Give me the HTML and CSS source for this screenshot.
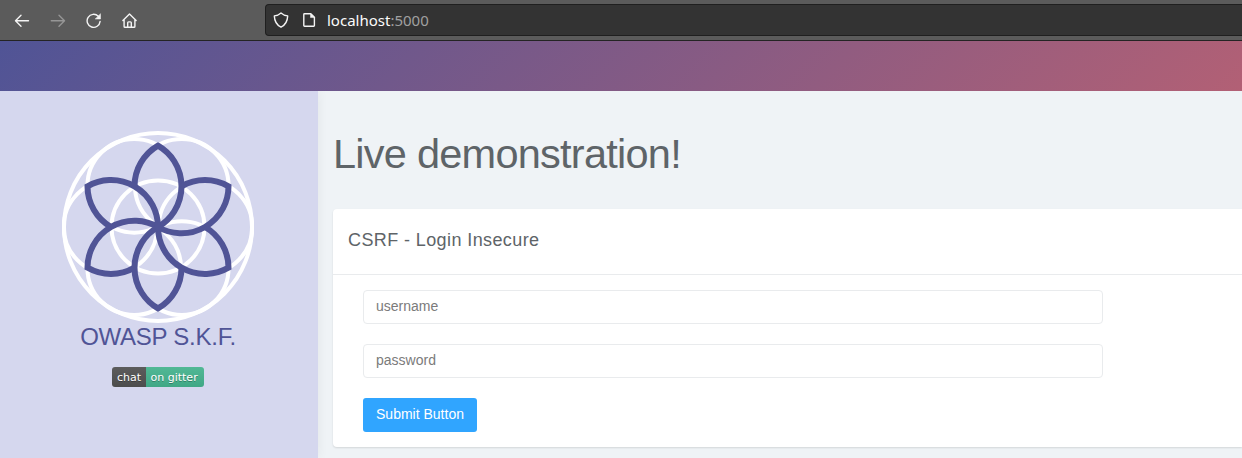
FILE: index.html
```html
<!DOCTYPE html>
<html lang="en">
<head>
<meta charset="utf-8">
<title>OWASP S.K.F.</title>
<link rel="stylesheet" href="styles.css">
</head>
<body>
<header class="toolbar">
  <nav class="nav-icons">
    <svg width="16" height="16" viewBox="0 0 16 16"><path d="M14.500 7.700H1.700M7 2.200L1.500 7.700 7 13.200"/></svg>
    <svg class="dim" width="16" height="16" viewBox="0 0 16 16"><path d="M1.300 7.700h13M9 2.200l5.500 5.500L9 13.200"/></svg>
    <svg width="16" height="16" viewBox="0 0 16 16"><path d="M12.300 3.300A6.500 6.500 0 1 0 14.100 8.400"/><path class="solid" d="M14.500 1v5H9.500z"/></svg>
    <svg width="16" height="16" viewBox="0 0 16 16"><path d="M.9 7.600L7.500 1l6.600 6.600M2.100 6.600v6.800q0 .9.900.9h9q.9 0 .9-.9V6.600M5.700 14.200V9.800q0-.9.900-.9h1.800q.9 0 .9.900v4.400"/></svg>
  </nav>
  <div class="urlbar">
    <svg width="16" height="16" viewBox="0 0 16 16"><path d="M8 .9C6.200 2.500 3.800 3.600 1.300 3.900 1.500 9 3 12.700 8 15.200c5-2.500 6.500-6.200 6.700-11.300C12.200 3.600 9.800 2.500 8 .9z"/></svg>
    <svg width="16" height="16" viewBox="0 0 16 16"><path d="M3.500 1.700h6.300L13.400 5.300v8.300q0 .7-.7.700H3.500q-.7 0-.7-.7V2.400q0-.7.700-.7z"/><path class="solid" d="M9.500 1.700v3.900h3.900z"/></svg>
    <span class="url">localhost<span class="port">:5000</span></span>
  </div>
</header>
<div class="banner"></div>
<div class="layout">
  <aside class="sidebar">
    <svg class="logo" width="192" height="192" viewBox="-96 -96 192 192">
      <defs><path id="petal" d="M0 0A47 47 0 0 0 0-81.400A47 47 0 0 0-23.500-40.700"/></defs>
      <g class="rings">
        <circle r="94"/><circle r="46.500"/>
        <circle cx="47.500" r="46.800"/><circle cx="-47.500" r="46.800"/>
        <circle cx="23.750" cy="-41.140" r="46.800"/><circle cx="-23.750" cy="-41.140" r="46.800"/>
        <circle cx="23.750" cy="41.140" r="46.800"/><circle cx="-23.750" cy="41.140" r="46.800"/>
      </g>
      <g class="petals">
        <use href="#petal"/><use href="#petal" transform="rotate(60)"/><use href="#petal" transform="rotate(120)"/>
        <use href="#petal" transform="rotate(180)"/><use href="#petal" transform="rotate(240)"/><use href="#petal" transform="rotate(300)"/>
      </g>
    </svg>
    <div class="brand">OWASP S.K.F.</div>
    <div class="badge"><span class="chat">chat</span><span class="gitter">on gitter</span></div>
  </aside>
  <main class="content">
    <h1>Live demonstration!</h1>
    <section class="card">
      <h2>CSRF - Login Insecure</h2>
      <form class="form">
        <input type="text" placeholder="username">
        <input type="password" placeholder="password">
        <button type="button">Submit Button</button>
      </form>
    </section>
  </main>
</div>
</body>
</html>
```
FILE: styles.css
```css
* { box-sizing: border-box; }
body { margin: 0; height: 458px; overflow: hidden; background: #eff3f6; color: #5e6468; font-family: "Liberation Sans", Arial, sans-serif; }
.toolbar { display: flex; height: 41px; background: #5b5b5b; border-bottom: 1px solid #242424; }
.nav-icons { display: flex; gap: 20px; width: 265px; padding: 13px 0 0 14px; flex: none; }
.toolbar svg { fill: none; stroke: #f4f4f4; stroke-width: 1.4; stroke-linecap: round; stroke-linejoin: round; flex: none; }
.toolbar .dim { stroke: #969696; }
.toolbar .solid { fill: #f4f4f4; stroke-width: .5; }
.urlbar { flex: 1; display: flex; align-items: center; height: 32px; margin-top: 4px; padding-left: 7px; background: #333; border: 1px solid #1f1f1f; border-right: 0; border-radius: 4px 0 0 4px; }
.urlbar svg + svg { margin-left: 12px; }
.url { margin-left: 10px; color: #fbfbfb; font: 15px "Noto Sans", sans-serif; }
.port { color: #a0a0a0; }
.banner { height: 50px; background: linear-gradient(135deg, #505496 0%, #b26075 100%); }
.layout { display: flex; height: 367px; }
.sidebar { width: 318px; flex: none; display: flex; flex-direction: column; align-items: center; padding: 40px 2px 0 0; background: #d5d7ee; box-shadow: 1px 0 10px rgba(0,0,0,.05); clip-path: inset(0 -15px 0 0); }
.logo { display: block; flex: none; }
.rings { fill: none; stroke: #fff; stroke-width: 4; }
.petals { fill: none; stroke: #505496; stroke-width: 6; }
.brand { height: 28px; color: #505496; font-size: 24px; line-height: 28px; letter-spacing: -.25px; white-space: nowrap; }
.badge { display: flex; margin-top: 16px; height: 20px; border-radius: 3px; overflow: hidden; color: #fff; font: 11px/22px "DejaVu Sans", sans-serif; text-shadow: 0 1px rgba(1,1,1,.3); }
.chat { width: 34px; text-align: center; background: linear-gradient(#5c5c5c, #4c4c4c); }
.gitter { width: 58px; padding-left: 4.500px; white-space: nowrap; background: linear-gradient(#51b895, #40a785); }
.content { flex: 1; padding: 39px 0 0 15px; }
h1 { margin: 0; height: 79px; font-size: 41.500px; line-height: 48px; font-weight: 400; letter-spacing: -.75px; white-space: nowrap; }
.card { height: 238px; background: #fff; border-radius: 4px 0 0 4px; box-shadow: 0 1px 2px rgba(0,0,0,.12); }
h2 { margin: 0; height: 66px; padding: 20px 15px; border-bottom: 1px solid #e9ebed; font-size: 18px; line-height: 22px; font-weight: 400; letter-spacing: .4px; }
.form { display: flex; flex-direction: column; align-items: flex-start; gap: 20px; padding: 15px 30px; }
input { width: 740px; height: 34px; padding: 0 12px 2px; border: 1px solid #e9ebed; border-radius: 4px; font: 14px "Liberation Sans", sans-serif; }
input::placeholder { color: #7b7b7b; opacity: 1; }
button { width: 114px; height: 34px; padding: 0 0 2px; border: 0; border-radius: 3px; background: #30a5ff; color: #fff; font: 14px "Liberation Sans", sans-serif; }
```
